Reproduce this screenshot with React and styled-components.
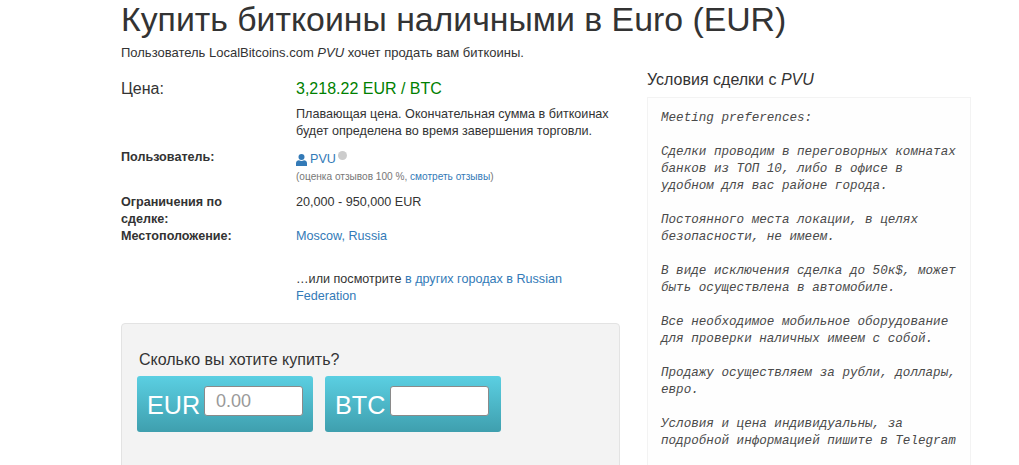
import React from "react";
import styled, { createGlobalStyle } from "styled-components";

const Global = createGlobalStyle`
  html, body { margin: 0; padding: 0; height: 465px; overflow: hidden; background: #fff; }
  body { font-family: "Liberation Sans", Arial, sans-serif; font-size: 12.6px; line-height: 17px; color: #333; }
`;
const Page = styled.div`
  width: 850px;
  height: 465px;
  margin-left: 121px;
  overflow: hidden;
`;
const Title = styled.h1`
  margin: 0;
  font-size: 33.8px;
  line-height: 39px;
  font-weight: 400;
`;
const Lead = styled.p`
  margin: 5px 0 0;
  font-size: 13px;
  line-height: 17px;
`;
const Columns = styled.div`
  display: grid;
  grid-template-columns: 499px 324px;
  column-gap: 27px;
  margin-top: 8px;
`;
const Main = styled.div`
  display: flex;
  flex-direction: column;
  padding-top: 9px;
`;
const Row = styled.div`
  display: grid;
  grid-template-columns: 175px 320px;
  margin-top: ${p => p.$top || 0}px;
`;
const PriceLabel = styled.div`
  font-size: 16px;
  line-height: 22px;
`;
const Price = styled.div`
  font-size: 16px;
  line-height: 22px;
  color: #008000;
`;
const Note = styled.div`
  margin-top: 6px;
`;
const Label = styled.div`
  font-weight: 700;
  width: 125px;
`;
const Link = styled.a`
  color: #337ab7;
  text-decoration: none;
`;
const UserLine = styled.div`
  display: flex;
  align-items: center;
  line-height: 20px;
  font-size: 12.6px;
`;
const UserIcon = styled.svg`
  width: 11px;
  height: 12px;
  margin-right: 3px;
  margin-top: 2px;
  fill: #337ab7;
`;
const Dot = styled.span`
  width: 9px;
  height: 9px;
  border-radius: 50%;
  background: #ccc;
  margin: -7px 0 0 2px;
`;
const Small = styled.div`
  margin-top: 1px;
  font-size: 10.1px;
  line-height: 14px;
  color: #777;
`;
const Panel = styled.div`
  margin-top: 18px;
  height: 200px;
  padding: 26px 15px 0;
  background: #f3f3f3;
  border: 1px solid #e3e3e3;
  border-radius: 4px;
`;
const Question = styled.div`
  padding-left: 2px;
  font-size: 16px;
  line-height: 20px;
`;
const Converters = styled.div`
  display: flex;
  gap: 12px;
  margin-top: 6px;
`;
const Converter = styled.div`
  display: flex;
  align-items: flex-start;
  width: 176px;
  height: 56px;
  box-sizing: border-box;
  padding: 10px ${p => p.$right}px 0 10px;
  border-radius: 3px;
  background: linear-gradient(#5bcfe2, #3f9fae);
  color: #fff;
  font-size: 25.2px;
  line-height: 36px;
`;
const Currency = styled.span`
  margin-top: 1px;
  flex: 1;
`;
const Amount = styled.input`
  box-sizing: border-box;
  width: 99px;
  height: 30px;
  padding: 0 11px;
  border: 1px solid #8a8a8a;
  border-radius: 3px;
  background: #fff;
  font-family: "Liberation Sans", Arial, sans-serif;
  font-size: 18px;
  &::placeholder { color: #999; opacity: 1; }
`;
const Side = styled.aside`
  display: flex;
  flex-direction: column;
  margin-top: 1px;
`;
const SideTitle = styled.h3`
  margin: 0;
  font-size: 16px;
  line-height: 20px;
  font-weight: 400;
`;
const Terms = styled.pre`
  margin: 7px 0 0;
  padding: 12px 13px;
  height: 400px;
  box-sizing: border-box;
  border: 1px solid #f3f3f3;
  background: #fefefe;
  font-family: "Liberation Mono", "Courier New", monospace;
  font-style: italic;
  font-size: 12.6px;
  line-height: 17px;
  color: #4a4a4a;
  white-space: pre-wrap;
`;

const terms = `Meeting preferences:

Сделки проводим в переговорных комнатах
банков из ТОП 10, либо в офисе в
удобном для вас районе города.

Постоянного места локации, в целях
безопасности, не имеем.

В виде исключения сделка до 50к$, может
быть осуществлена в автомобиле.

Все необходимое мобильное оборудование
для проверки наличных имеем с собой.

Продажу осуществляем за рубли, доллары,
евро.

Условия и цена индивидуальны, за
подробной информацией пишите в Telegram`;

export default function App() {
  return (
    <Page>
      <Global />
      <Title>Купить биткоины наличными в Euro (EUR)</Title>
      <Lead>Пользователь LocalBitcoins.com <em>PVU</em> хочет продать вам биткоины.</Lead>
      <Columns>
        <Main>
          <Row>
            <PriceLabel>Цена:</PriceLabel>
            <div>
              <Price>3,218.22 EUR / BTC</Price>
              <Note>Плавающая цена. Окончательная сумма в биткоинах будет определена во время завершения торговли.</Note>
            </div>
          </Row>
          <Row $top={9}>
            <Label>Пользователь:</Label>
            <div>
              <UserLine>
                <UserIcon viewBox="0 0 11 12"><circle cx="5.5" cy="3" r="3" /><path d="M0 12V9.2C0 7.500 1.400 6.400 3 6.300c.7.5 1.500.8 2.500.8s1.800-.3 2.500-.8c1.600.1 3 1.200 3 2.900V12z" /></UserIcon>
                <Link>PVU</Link>
                <Dot />
              </UserLine>
              <Small>(оценка отзывов 100 %, <Link>смотреть отзывы</Link>)</Small>
            </div>
          </Row>
          <Row $top={10}>
            <Label>Ограничения по сделке:</Label>
            <div>20,000 - 950,000 EUR</div>
          </Row>
          <Row>
            <Label>Местоположение:</Label>
            <Link>Moscow, Russia</Link>
          </Row>
          <Row $top={26}>
            <div />
            <div>…или посмотрите <Link>в других городах в Russian Federation</Link></div>
          </Row>
          <Panel>
            <Question>Сколько вы хотите купить?</Question>
            <Converters>
              <Converter $right={10}><Currency>EUR</Currency><Amount placeholder="0.00" /></Converter>
              <Converter $right={12}><Currency>BTC</Currency><Amount /></Converter>
            </Converters>
          </Panel>
        </Main>
        <Side>
          <SideTitle>Условия сделки с <em>PVU</em></SideTitle>
          <Terms>{terms}</Terms>
        </Side>
      </Columns>
    </Page>
  );
}
